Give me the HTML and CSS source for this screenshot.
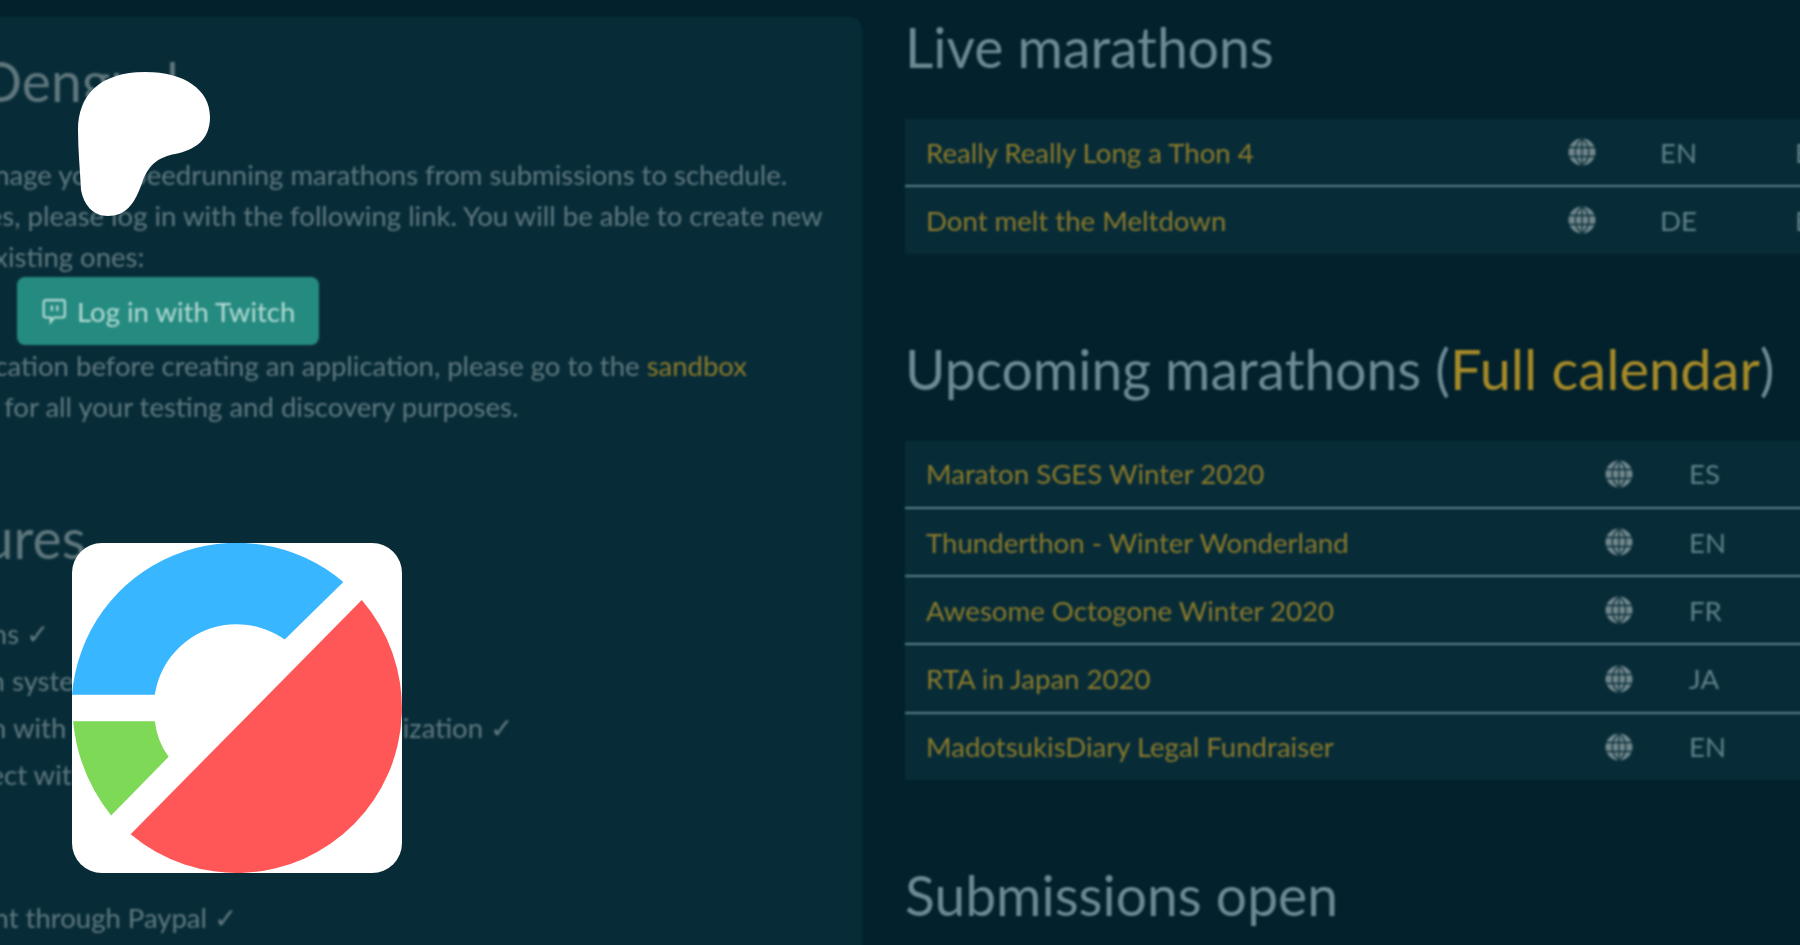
FILE: index.html
```html
<!DOCTYPE html>
<html lang="en">
<head>
<meta charset="utf-8">
<title>Oengus</title>
<link rel="stylesheet" href="styles.css">
</head>
<body>
<main class="page">
  <section class="panel">
    <h1 class="title welcome">Oengus!</h1>
    <p class="copy">
      <span class="line l1">Easily manage your speedrunning marathons from submissions to schedule.</span>
      <span class="line l2">For updates, please log in with the following link. You will be able to create new</span>
      <span class="line l3">manage existing ones:</span>
    </p>
    <div class="login-row">
      <a class="login" href="#">
        <svg class="twitch" viewBox="0 0 24 24" aria-hidden="true"><path d="M4.500 2h15.500a2 2 0 0 1 2 2v12a2 2 0 0 1-2 2h-8l-3 4v-4H4.500a2 2 0 0 1-2-2V4a2 2 0 0 1 2-2z"/><path d="M10 7v5M15 7v5"/></svg>
        <span>Log in with Twitch</span>
      </a>
    </div>
    <p class="copy">
      <span class="line l4">For verification before creating an application, please go to the <a class="gold" href="#">sandbox</a></span>
      <span class="line l5">instance for all your testing and discovery purposes.</span>
    </p>
    <h2 class="title features">Features</h2>
    <ul class="list">
      <li class="i1">Marathons ✓</li>
      <li class="i2">Submission system ✓</li>
      <li>Integration with your Twitch schedule organization ✓</li>
      <li>Interconnect with Twitch ✓</li>
    </ul>
    <ul class="list later">
      <li class="i5">Management through Paypal ✓</li>
    </ul>
  </section>

  <section class="board">
    <h2 class="title">Live marathons</h2>
    <div class="table live">
      <div class="row"><a class="gold" href="#">Really Really Long a Thon 4</a><svg class="globe" viewBox="0 0 28 28" aria-hidden="true"><use href="#globe"/></svg><span>EN</span><span>E</span></div>
      <div class="row"><a class="gold" href="#">Dont melt the Meltdown</a><svg class="globe" viewBox="0 0 28 28" aria-hidden="true"><use href="#globe"/></svg><span>DE</span><span>E</span></div>
    </div>
    <h2 class="title next">Upcoming marathons (<a class="gold" href="#">Full calendar</a>)</h2>
    <div class="table upcoming">
      <div class="row"><a class="gold" href="#">Maraton SGES Winter 2020</a><svg class="globe" viewBox="0 0 28 28" aria-hidden="true"><use href="#globe"/></svg><span>ES</span></div>
      <div class="row"><a class="gold" href="#">Thunderthon - Winter Wonderland</a><svg class="globe" viewBox="0 0 28 28" aria-hidden="true"><use href="#globe"/></svg><span>EN</span></div>
      <div class="row"><a class="gold" href="#">Awesome Octogone Winter 2020</a><svg class="globe" viewBox="0 0 28 28" aria-hidden="true"><use href="#globe"/></svg><span>FR</span></div>
      <div class="row"><a class="gold" href="#">RTA in Japan 2020</a><svg class="globe" viewBox="0 0 28 28" aria-hidden="true"><use href="#globe"/></svg><span>JA</span></div>
      <div class="row"><a class="gold" href="#">MadotsukisDiary Legal Fundraiser</a><svg class="globe" viewBox="0 0 28 28" aria-hidden="true"><use href="#globe"/></svg><span>EN</span></div>
    </div>
    <h2 class="title next">Submissions open</h2>
  </section>
</main>

<svg class="blob" viewBox="0 0 132 144" aria-hidden="true"><path d="M0 58C0 23 22 0 67 0c40 0 65 18 65 45 0 23-15 33-35 37-15 3-25 9-32 26-8 25-18 36-35 36-15 0-24-11-27-26C2 98 0 78 0 58z"/></svg>

<svg class="logo" viewBox="0 0 287 287" aria-hidden="true">
  <rect class="logo-bg" width="287" height="287" rx="26"/>
  <path class="logo-blue" d="M0 132A143.500 143.500 0 0 1 236 34L185 84A72 72 0 0 0 72 132z"/>
  <path class="logo-green" d="M1 155H72Q74 172 84 186L34 237Q5 200 1 155z"/>
  <path class="logo-red" d="M252 49.600A143.500 143.500 0 0 1 51 253.200z"/>
</svg>

<svg class="defs" aria-hidden="true"><defs><g id="globe"><circle class="globe-disc" cx="14" cy="14" r="13.500"/><path class="globe-grid" d="M1 9.500h26M1 18.500h26M14 .5v27M14 .5c-9 7-9 20 0 27M14 .5c9 7 9 20 0 27"/></g></defs></svg>
</body>
</html>
```
FILE: styles.css
```css
* { box-sizing: border-box; }
html, body { margin: 0; height: 945px; overflow: hidden; background: #02212c; }
body { font-family: Lato, "Liberation Sans", sans-serif; font-size: 27.500px; color: #60787f; position: relative; }
.page { display: flex; width: 2200px; height: 945px; margin-left: -126px; filter: blur(0.8px); }
.panel { flex: none; width: 988px; height: 960px; margin-top: 17px; padding: 32px 0 0 0; background: #072c38; border-radius: 12px 12px 0 0; }
.title { margin: 0; font-size: 55.200px; line-height: 65px; font-weight: 400; color: #6d8993; white-space: nowrap; }
.panel .title { color: #5f767c; }
.welcome { padding-left: 104px; margin-bottom: 40px; }
.copy { margin: 0; line-height: 41px; white-space: nowrap; }
.line { display: block; }
.l1 { margin-left: 9px; }
.l2 { margin-left: -2px; }
.l3 { margin-left: 5px; }
.l4 { margin-left: 14px; }
.l5 { margin-left: 23px; }
.login-row { height: 68px; padding-left: 143px; }
.login { display: inline-flex; align-items: center; gap: 10px; width: 302px; height: 68px; padding: 0 24px; background: #258a80; border-radius: 8px; color: #b5dcd5; font-size: 27.500px; text-decoration: none; white-space: nowrap; }
.twitch { flex: none; width: 26px; height: 28px; fill: none; stroke: #b5dcd5; stroke-width: 2; }
.features { margin-top: 79px; padding-left: 4px; }
.list { list-style: none; margin: 42px 0 0; padding: 0; display: flex; flex-direction: column; gap: 6px; line-height: 41px; white-space: nowrap; }
.list.later { margin-top: 102px; }
.i1 { margin-left: 15px; }
.i2 { margin-left: -5px; }
.i5 { margin-left: -14px; }
.gold { color: #8c7a2a; text-decoration: none; }
.title .gold { color: #a68a28; font-size: 56px; line-height: 0; }
.board { flex: none; width: 1200px; margin-left: 43px; padding-top: 16px; }
.board .title { line-height: 63px; margin-bottom: 40px; }
.board .next { margin-top: 84px; }
.table { background: #072c38; color: #5f8089; font-size: 27.600px; }
.row { display: grid; align-items: center; height: 66.300px; padding-left: 21px; white-space: nowrap; }
.row + .row { border-top: 2px solid #5a808c; height: 68.300px; }
.live .row { grid-template-columns: 642px 92px 135px auto; }
.upcoming .row { grid-template-columns: 679px 84px auto; }
.globe { width: 28px; height: 28px; }
.globe-disc { fill: #71878c; }
.globe-grid { fill: none; stroke: #0b2f3a; stroke-width: 1.300; }
.blob { position: absolute; left: 78px; top: 72px; width: 132px; height: 144px; fill: #fff; }
.logo { position: absolute; left: 72px; top: 543px; width: 330px; height: 330px; }
.logo-bg { fill: #fff; }
.logo-blue { fill: #38b6ff; }
.logo-green { fill: #7ed957; }
.logo-red { fill: #ff5757; }
.defs { position: absolute; width: 0; height: 0; }
```
